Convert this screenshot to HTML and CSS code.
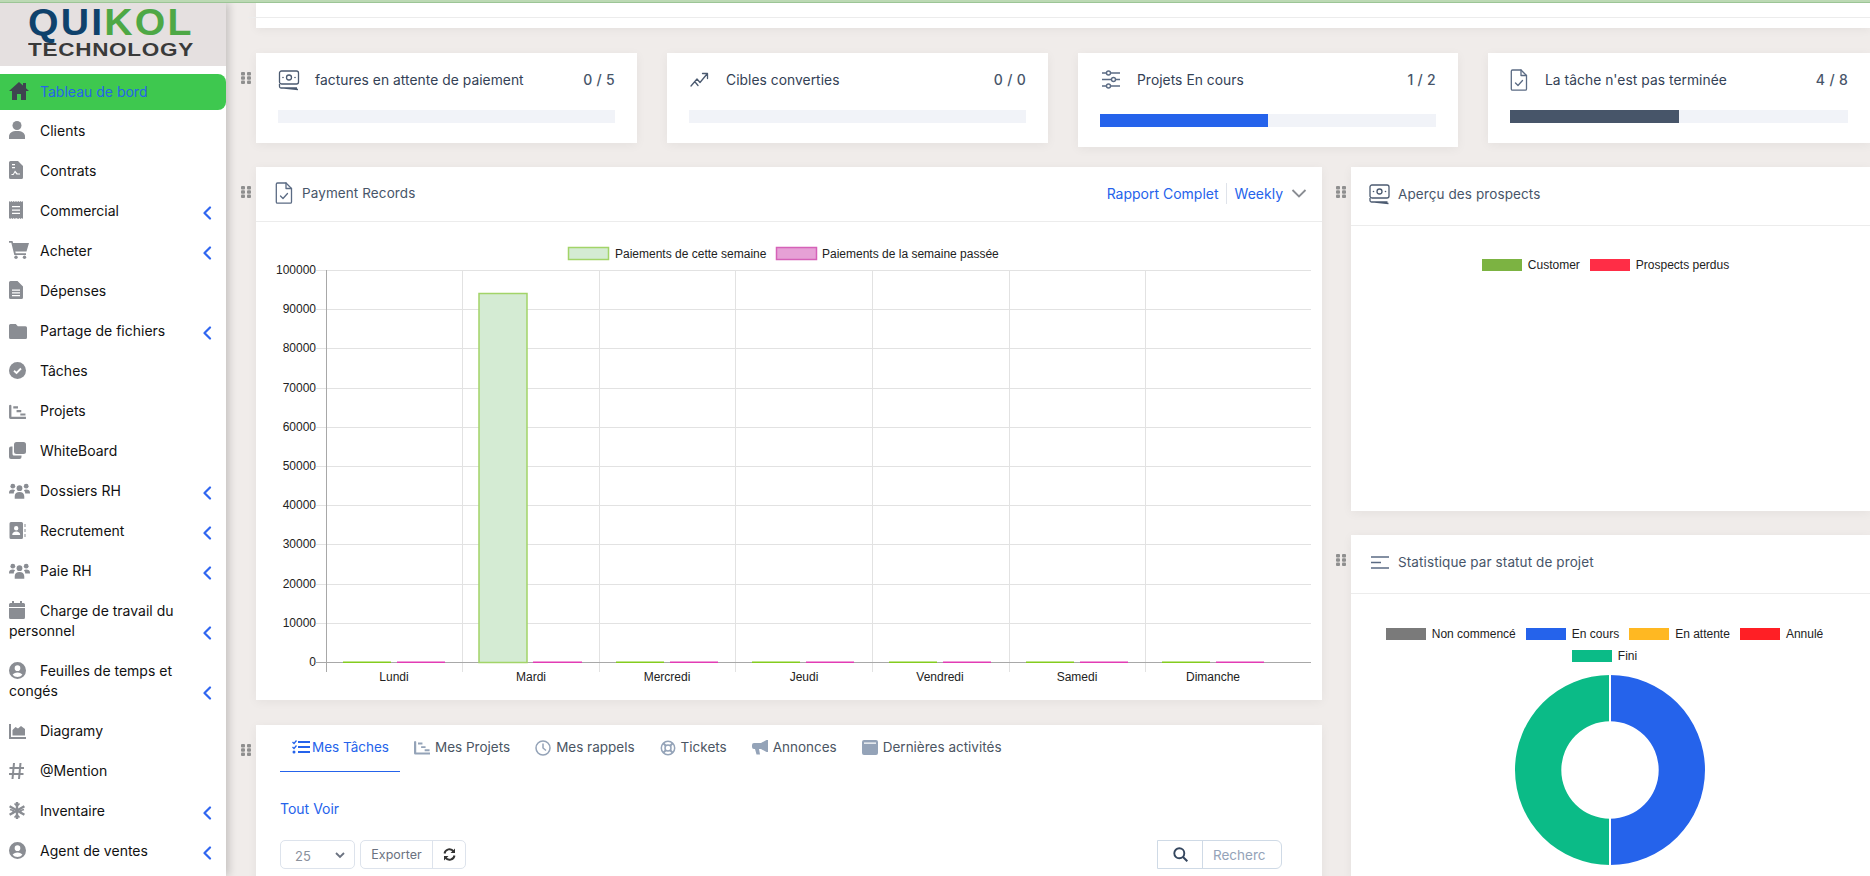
FILE: index.html
```html
<!DOCTYPE html>
<html lang="fr">
<head>
<meta charset="utf-8">
<title>Tableau de bord</title>
<link rel="stylesheet" href="styles.css">
</head>
<body>
<svg class="defs" width="0" height="0" aria-hidden="true">
  <symbol id="i-grip" viewBox="0 0 10 12"><g fill="#8f8f8f"><rect x="0" y="0" width="4" height="3.4" rx="1"/><rect x="6" y="0" width="4" height="3.4" rx="1"/><rect x="0" y="4.3" width="4" height="3.4" rx="1"/><rect x="6" y="4.3" width="4" height="3.4" rx="1"/><rect x="0" y="8.6" width="4" height="3.4" rx="1"/><rect x="6" y="8.6" width="4" height="3.4" rx="1"/></g></symbol>
  <symbol id="i-chev" viewBox="0 0 10 14"><path d="M8 1.5 2.5 7 8 12.500" fill="none" stroke="#2f66f0" stroke-width="2.200" stroke-linecap="round" stroke-linejoin="round"/></symbol>
  <symbol id="i-users" viewBox="0 0 22 16"><g fill="#8a8d93"><circle cx="4" cy="3" r="2.500"/><circle cx="18" cy="3" r="2.500"/><circle cx="11" cy="5" r="3"/><path d="M0 10c0-2.500 1.500-3.500 4-3.500 1 0 1.800.2 2.400.6C5.500 8 5 9 5 10.500H0zM22 10c0-2.500-1.500-3.500-4-3.500-1 0-1.800.2-2.400.6.900.9 1.400 1.900 1.400 3.400h5zM6 13.500C6 10.500 8 9 11 9s5 1.500 5 4.500V16H6z"/></g></symbol>
  <symbol id="i-ucircle" viewBox="0 0 18 18"><path fill="#8a8d93" fill-rule="evenodd" d="M9 0a9 9 0 1 1 0 18A9 9 0 0 1 9 0zm0 3.500a3 3 0 1 0 0 6 3 3 0 0 0 0-6zM3.800 13.600A6.800 6.800 0 0 0 9 16a6.800 6.800 0 0 0 5.200-2.400C13.500 12 11.500 11 9 11s-4.500 1-5.200 2.600z"/></symbol>
  <symbol id="i-gantt" viewBox="0 0 18 16"><path fill="currentColor" d="M0 1.500A1.500 1.500 0 0 1 2.500 1.500V13.500H18V16H1.500A1.500 1.500 0 0 1 0 14.500zM4.500 2.500h5v2.200h-5zM8 6.500h5v2.200H8zM12 10h5.500v2.200H12z"/></symbol>
  <symbol id="i-money" viewBox="0 0 22 22"><g fill="none" stroke="#4b5a70" stroke-width="1.300"><rect x="1.500" y="2" width="19" height="13" rx="2"/><circle cx="11" cy="8.500" r="2.500"/><path d="M1.500 15v2.500c0 .8.700 1.500 1.500 1.500h16M6 19l14 1.500"/></g><g fill="#4b5a70"><circle cx="5" cy="8.500" r=".8"/><circle cx="17" cy="8.500" r=".8"/></g></symbol>
  <symbol id="i-filecheck" viewBox="0 0 18 22"><g fill="none" stroke="#5b6b84" stroke-width="1.300" stroke-linejoin="round" stroke-linecap="round"><path d="M2.500 1h8.500l5.500 5.500v13.500a1.200 1.200 0 0 1-1.200 1.200H2.500A1.200 1.200 0 0 1 1.300 20V2.200A1.200 1.200 0 0 1 2.500 1z"/><path d="M11 1v5.500h5.500M5.500 14l2.500 2.500 4.500-5"/></g></symbol>
</svg>

<div class="topline"></div>
<div class="app">
  <aside class="sidebar">
    <div class="logo">
      <div class="logo-main"><span class="logo-navy">QUI</span><span class="logo-green">KOL</span></div>
      <div class="logo-sub">TECHNOLOGY</div>
    </div>
    <nav class="menu">
      <a class="item active"><span class="label"><span class="ico"><svg width="20" height="18" viewBox="0 0 20 18"><path fill="#3f4450" d="M10 0 0 9h3v9h5v-6h4v6h5V9h3L17 6.300V1h-3v2.600z"/></svg></span>Tableau de bord</span></a>
      <a class="item"><span class="label"><span class="ico"><svg width="16" height="18" viewBox="0 0 16 18"><g fill="#8a8d93"><circle cx="8" cy="4.500" r="4.500"/><path d="M0 18v-2.500C0 12 3 10 8 10s8 2 8 5.500V18z"/></g></svg></span>Clients</span></a>
      <a class="item"><span class="label"><span class="ico"><svg width="14" height="18" viewBox="0 0 14 18"><path fill="#8a8d93" fill-rule="evenodd" d="M1.500 0H9l5 5v11.500a1.500 1.500 0 0 1-1.500 1.500h-11A1.500 1.500 0 0 1 0 16.500v-15A1.500 1.500 0 0 1 1.500 0zM3 3v1.200h3V3zm0 3v1.200h3V6zm-.500 8h2l1.500-2.500 1.500 2h3.500v-1H8.500L6 9.500 4 13H2.500z"/></svg></span>Contrats</span></a>
      <a class="item"><span class="label"><span class="ico"><svg width="14" height="18" viewBox="0 0 14 18"><path fill="#8a8d93" fill-rule="evenodd" d="M0 0l1.200 1L2.300 0l1.200 1L4.700 0l1.200 1L7 0l1.100 1 1.200-1 1.100 1 1.200-1 1.200 1L14 0v18l-1.200-1-1.200 1-1.200-1-1.100 1L7 17l-1.100 1-1.200-1-1.200 1-1.200-1L1.200 18 0 17zM3 5v1.300h8V5zm0 3.400v1.300h8V8.400zm0 3.400v1.300h8v-1.300z"/></svg></span>Commercial</span><svg class="chev"><use href="#i-chev"/></svg></a>
      <a class="item"><span class="label"><span class="ico"><svg width="20" height="18" viewBox="0 0 20 18"><g fill="#8a8d93"><path d="M0 0h3.500l.6 2H20l-2.500 8.500H6.300l.4 1.800H17v1.700H5.300L2.300 1.700H0z"/><circle cx="7" cy="16.300" r="1.700"/><circle cx="15.500" cy="16.300" r="1.700"/></g></svg></span>Acheter</span><svg class="chev"><use href="#i-chev"/></svg></a>
      <a class="item"><span class="label"><span class="ico"><svg width="14" height="18" viewBox="0 0 14 18"><path fill="#8a8d93" fill-rule="evenodd" d="M1.500 0H8.500l5.500 5.500v11a1.500 1.500 0 0 1-1.500 1.500h-11A1.500 1.500 0 0 1 0 16.500v-15A1.500 1.500 0 0 1 1.500 0zM3 8.500v1.200h8V8.500zm0 2.800v1.200h8v-1.200zm0 2.800v1.200h8v-1.200z"/></svg></span>Dépenses</span></a>
      <a class="item"><span class="label"><span class="ico"><svg width="18" height="15" viewBox="0 0 18 15"><path fill="#8a8d93" d="M1.500 0h5.300l2 2.300h7.700A1.500 1.500 0 0 1 18 3.800v9.700a1.500 1.500 0 0 1-1.500 1.500h-15A1.500 1.500 0 0 1 0 13.500v-12A1.500 1.500 0 0 1 1.500 0z"/></svg></span>Partage de fichiers</span><svg class="chev"><use href="#i-chev"/></svg></a>
      <a class="item"><span class="label"><span class="ico"><svg width="17" height="17" viewBox="0 0 17 17"><circle cx="8.500" cy="8.500" r="8.500" fill="#8a8d93"/><path d="M5 8.800 7.500 11 12 6.500" fill="none" stroke="#fff" stroke-width="1.800"/></svg></span>Tâches</span></a>
      <a class="item"><span class="label"><span class="ico ico-grey"><svg width="17" height="15"><use href="#i-gantt"/></svg></span>Projets</span></a>
      <a class="item"><span class="label"><span class="ico"><svg width="17" height="17" viewBox="0 0 17 17"><g fill="#8a8d93"><rect x="5" y="0" width="12" height="12" rx="2.500"/><path d="M3.500 4.500v7.500c0 .8.700 1.500 1.500 1.500h7.500V15a2 2 0 0 1-2 2H2a2 2 0 0 1-2-2V6.500a2 2 0 0 1 2-2z"/></g></svg></span>WhiteBoard</span></a>
      <a class="item"><span class="label"><span class="ico"><svg width="21" height="16"><use href="#i-users"/></svg></span>Dossiers RH</span><svg class="chev"><use href="#i-chev"/></svg></a>
      <a class="item"><span class="label"><span class="ico"><svg width="17" height="17" viewBox="0 0 17 17"><path fill="#8a8d93" fill-rule="evenodd" d="M2 0h10.500A1.500 1.500 0 0 1 14 1.500v14a1.500 1.500 0 0 1-1.500 1.500H2A1.500 1.500 0 0 1 .5 15.500v-14A1.500 1.500 0 0 1 2 0zm5.200 4a2.200 2.200 0 1 0 0 4.400 2.200 2.200 0 0 0 0-4.400zM3.200 13h8c0-2-1.600-3.500-4-3.500s-4 1.500-4 3.500z"/><path fill="#8a8d93" d="M15.500 2h1v3h-1zM15.500 7h1v3h-1zM15.500 12h1v3h-1z"/></svg></span>Recrutement</span><svg class="chev"><use href="#i-chev"/></svg></a>
      <a class="item"><span class="label"><span class="ico"><svg width="21" height="16"><use href="#i-users"/></svg></span>Paie RH</span><svg class="chev"><use href="#i-chev"/></svg></a>
      <a class="item"><span class="label"><span class="ico"><svg width="16" height="18" viewBox="0 0 16 18"><path fill="#8a8d93" d="M3 0h2v2h6V0h2v2h1.500A1.500 1.500 0 0 1 16 3.500V6H0V3.500A1.500 1.500 0 0 1 1.500 2H3zM0 7h16v9.500a1.500 1.500 0 0 1-1.500 1.500h-13A1.500 1.500 0 0 1 0 16.500z"/></svg></span>Charge de travail du personnel</span><svg class="chev"><use href="#i-chev"/></svg></a>
      <a class="item"><span class="label"><span class="ico"><svg width="17" height="17"><use href="#i-ucircle"/></svg></span>Feuilles de temps et congés</span><svg class="chev"><use href="#i-chev"/></svg></a>
      <a class="item"><span class="label"><span class="ico"><svg width="17" height="15" viewBox="0 0 17 15"><path fill="#8a8d93" d="M0 0h2v13h15v2H0zM3.500 6l3-3 2.500 1.500L12 2l4 3v6.500H3.500z"/></svg></span>Diagramy</span></a>
      <a class="item"><span class="label"><span class="ico"><svg width="15" height="16" viewBox="0 0 15 16"><path fill="none" stroke="#8a8d93" stroke-width="2" d="M5 0 3.500 16M11.500 0 10 16M0.500 5H15M0 11h14.500"/></svg></span>@Mention</span></a>
      <a class="item"><span class="label"><span class="ico"><svg width="16" height="17" viewBox="0 0 16 17"><g fill="none" stroke="#8a8d93" stroke-width="2.400"><path d="M8 0v17M.6 4.200l14.800 8.600M15.400 4.200.6 12.800"/><path stroke-width="1.700" d="M5.500 1.500 8 4l2.500-2.500M5.500 15.500 8 13l2.500 2.500M1 7.500l3.400 1-1 3.400M15 7.500l-3.400 1 1 3.400"/></g></svg></span>Inventaire</span><svg class="chev"><use href="#i-chev"/></svg></a>
      <a class="item"><span class="label"><span class="ico"><svg width="17" height="17"><use href="#i-ucircle"/></svg></span>Agent de ventes</span><svg class="chev"><use href="#i-chev"/></svg></a>
    </nav>
  </aside>

  <main class="main">
    <div class="card strip"><div class="strip-line"></div></div>

    <section class="stats">
      <div class="card stat">
        <svg class="grip"><use href="#i-grip"/></svg>
        <div class="stat-head"><svg class="stat-ico" width="22" height="22"><use href="#i-money"/></svg><span class="stat-title">factures en attente de paiement</span><span class="stat-num">0 / 5</span></div>
        <div class="bar"></div>
      </div>
      <div class="card stat">
        <div class="stat-head"><svg class="stat-ico" width="22" height="21" viewBox="0 0 21 21"><path d="M1.500 17 7.500 10l3 3.500 7-8.500M13 4.500h5v5M6 13.500l2.500 3" fill="none" stroke="#4b5a70" stroke-width="1.300" stroke-linecap="round" stroke-linejoin="round"/></svg><span class="stat-title">Cibles converties</span><span class="stat-num">0 / 0</span></div>
        <div class="bar"></div>
      </div>
      <div class="card stat stat-tall">
        <div class="stat-head"><svg class="stat-ico" width="22" height="21" viewBox="0 0 21 21"><g stroke="#5b6b84" stroke-width="1.400" fill="#fff"><path d="M1.500 4h18M1.500 10.500h18M1.500 17h18"/><circle cx="8" cy="4" r="2"/><circle cx="13" cy="10.500" r="2"/><circle cx="8" cy="17" r="2"/></g></svg><span class="stat-title">Projets En cours</span><span class="stat-num">1 / 2</span></div>
        <div class="bar"><div class="fill fill-blue"></div></div>
      </div>
      <div class="card stat">
        <div class="stat-head"><svg class="stat-ico stat-ico-doc" width="18" height="22"><use href="#i-filecheck"/></svg><span class="stat-title">La tâche n'est pas terminée</span><span class="stat-num">4 / 8</span></div>
        <div class="bar"><div class="fill fill-slate"></div></div>
      </div>
    </section>

    <section class="content">
      <div class="col">
        <div class="card pay">
          <svg class="grip"><use href="#i-grip"/></svg>
          <header class="head pay-head">
            <svg class="head-ico" width="18" height="22"><use href="#i-filecheck"/></svg>
            <h2 class="head-title">Payment Records</h2>
            <a class="link report">Rapport Complet</a>
            <span class="weekly">Weekly<svg width="16" height="9" viewBox="0 0 15 9"><path d="M1 1l6.500 6.500L14 1" fill="none" stroke="#8a8d93" stroke-width="1.800"/></svg></span>
          </header>
          <svg class="chart" width="1066" height="478" viewBox="256 222 1066 478">
            <g stroke="#e2e2e2" stroke-width="1">
              <path d="M316 270.500H1311M316 309.500H1311M316 348.500H1311M316 388.500H1311M316 427.500H1311M316 466.500H1311M316 505.500H1311M316 544.500H1311M316 584.500H1311M316 623.500H1311"/>
              <path d="M462.500 270V672M599.500 270V672M735.500 270V672M872.500 270V672M1009.500 270V672M1145.500 270V672"/>
            </g>
            <path d="M326.500 270V672M316 662.500H1311" stroke="#a8a8a8" stroke-width="1" fill="none"/>
            <rect x="479" y="293.500" width="48" height="369" fill="#d4ebd3" stroke="#a2d468" stroke-width="1.500"/>
            <g fill="#84cc1e">
              <rect x="343" y="661.500" width="48" height="1.500"/><rect x="616" y="661.500" width="48" height="1.500"/><rect x="752" y="661.500" width="48" height="1.500"/><rect x="889" y="661.500" width="48" height="1.500"/><rect x="1026" y="661.500" width="48" height="1.500"/><rect x="1162" y="661.500" width="48" height="1.500"/>
            </g>
            <g fill="#e23cb4">
              <rect x="397" y="661.500" width="48" height="1.500"/><rect x="533" y="661.500" width="49" height="1.500"/><rect x="670" y="661.500" width="48" height="1.500"/><rect x="806" y="661.500" width="48" height="1.500"/><rect x="943" y="661.500" width="48" height="1.500"/><rect x="1080" y="661.500" width="48" height="1.500"/><rect x="1216" y="661.500" width="48" height="1.500"/>
            </g>
            <g class="axis" text-anchor="end">
              <text x="316" y="274">100000</text><text x="316" y="313">90000</text><text x="316" y="352">80000</text><text x="316" y="392">70000</text><text x="316" y="431">60000</text><text x="316" y="470">50000</text><text x="316" y="509">40000</text><text x="316" y="548">30000</text><text x="316" y="588">20000</text><text x="316" y="627">10000</text><text x="316" y="666">0</text>
            </g>
            <g class="axis" text-anchor="middle">
              <text x="394" y="681">Lundi</text><text x="531" y="681">Mardi</text><text x="667" y="681">Mercredi</text><text x="804" y="681">Jeudi</text><text x="940" y="681">Vendredi</text><text x="1077" y="681">Samedi</text><text x="1213" y="681">Dimanche</text>
            </g>
            <rect x="568.500" y="247.500" width="40" height="12" fill="#d4ebd3" stroke="#a2d468" stroke-width="1.500"/>
            <text class="axis" x="615" y="258">Paiements de cette semaine</text>
            <rect x="776.500" y="247.500" width="40" height="12" fill="#e6a1d6" stroke="#d562b8" stroke-width="1.500"/>
            <text class="axis" x="822" y="258">Paiements de la semaine passée</text>
          </svg>
        </div>

        <div class="card tabs-card">
          <svg class="grip"><use href="#i-grip"/></svg>
          <nav class="tabs">
            <a class="tab tab-on"><svg width="18" height="14" viewBox="0 0 18 14"><g fill="#2563eb"><path d="M6 1h12v2H6zM6 6h12v2H6zM6 11h12v2H6z"/><circle cx="2" cy="12" r="1.500"/></g><path d="M.5 2 2 3.500 4.500.5M.5 7 2 8.500l2.500-3" fill="none" stroke="#2563eb" stroke-width="1.300"/></svg>Mes Tâches</a>
            <a class="tab"><svg class="tab-gantt" width="16" height="15"><use href="#i-gantt"/></svg>Mes Projets</a>
            <a class="tab"><svg width="16" height="16" viewBox="0 0 16 16"><circle cx="8" cy="8" r="7" fill="none" stroke="#94a3b8" stroke-width="1.500"/><path d="M8 3.500V8l3 2.500" fill="none" stroke="#94a3b8" stroke-width="1.500"/></svg>Mes rappels</a>
            <a class="tab"><svg width="16" height="16" viewBox="0 0 16 16"><g fill="none" stroke="#94a3b8"><circle cx="8" cy="8" r="6.700" stroke-width="1.500"/><circle cx="8" cy="8" r="3" stroke-width="1.500"/><path stroke-width="2" d="m3.300 3.300 2.500 2.500M12.700 3.300l-2.500 2.500M3.300 12.700l2.500-2.500M12.700 12.700l-2.500-2.500"/></g></svg>Tickets</a>
            <a class="tab"><svg width="16" height="15" viewBox="0 0 16 15"><path fill="#94a3b8" d="M16 0v12h-1.500L9 9H7l1 5.500H4.500L3 9H2a2 2 0 0 1-2-2V5a2 2 0 0 1 2-2h7l5.500-3z"/></svg>Annonces</a>
            <a class="tab"><svg width="16" height="15" viewBox="0 0 16 15"><path fill="#94a3b8" fill-rule="evenodd" d="M2 0h12a2 2 0 0 1 2 2v11a2 2 0 0 1-2 2H2a2 2 0 0 1-2-2V2a2 2 0 0 1 2-2zm0 2.500v1.200h12V2.500z"/></svg>Dernières activités</a>
          </nav>
          <a class="link tout">Tout Voir</a>
          <div class="tools">
            <div class="select"><span>25</span><svg width="10" height="7" viewBox="0 0 10 7"><path d="M1 1l4 4 4-4" fill="none" stroke="#6b7280" stroke-width="1.800"/></svg></div>
            <div class="btns"><span class="btn">Exporter</span><span class="btn btn-ref"><svg width="13" height="13" viewBox="0 0 13 13"><g fill="none" stroke="#333" stroke-width="1.900"><path d="M1.500 5.500A5 5 0 0 1 10.600 3.500M11.500 7.500A5 5 0 0 1 2.400 9.500"/></g><path fill="#333" d="M12 .500v4.500H7.500zM1 12.500V8h4.500z"/></svg></span></div>
            <div class="search"><span class="search-ico"><svg width="15" height="15" viewBox="0 0 15 15"><circle cx="6.300" cy="6.300" r="5" fill="none" stroke="#34465e" stroke-width="1.900"/><path d="m10 10 4.300 4.300" stroke="#34465e" stroke-width="2"/></svg></span><span class="search-in">Recherc</span></div>
          </div>
        </div>
      </div>

      <div class="col col-right">
        <div class="card prospects">
          <svg class="grip"><use href="#i-grip"/></svg>
          <header class="head side-head">
            <svg class="head-ico ico-money" width="23" height="22"><use href="#i-money"/></svg>
            <h2 class="head-title">Aperçu des prospects</h2>
          </header>
          <div class="legend legend-p">
            <span class="lg"><i class="sw sw-lime"></i>Customer</span>
            <span class="lg"><i class="sw sw-rose"></i>Prospects perdus</span>
          </div>
        </div>

        <div class="card status">
          <svg class="grip"><use href="#i-grip"/></svg>
          <header class="head side-head">
            <svg class="head-ico ico-lines" width="18" height="13" viewBox="0 0 18 13"><path d="M0 1h18M0 6.500h10M0 12h18" stroke="#5b6b84" stroke-width="1.300"/></svg>
            <h2 class="head-title">Statistique par statut de projet</h2>
          </header>
          <div class="legend legend-s">
            <span class="lg"><i class="sw sw-grey"></i>Non commencé</span>
            <span class="lg"><i class="sw sw-blue"></i>En cours</span>
            <span class="lg"><i class="sw sw-amber"></i>En attente</span>
            <span class="lg"><i class="sw sw-red"></i>Annulé</span>
            <span class="lg"><i class="sw sw-teal"></i>Fini</span>
          </div>
          <svg class="donut" width="192" height="192" viewBox="-96 -96 192 192">
            <path d="M0-95A95 95 0 0 1 0 95V48.700A48.700 48.700 0 0 0 0-48.700z" fill="#2563eb"/>
            <path d="M0 95A95 95 0 0 1 0-95V-48.700A48.700 48.700 0 0 0 0 48.700z" fill="#0bbb87"/>
            <path d="M0-96V-48M0 48V96" stroke="#fff" stroke-width="2"/>
          </svg>
        </div>
      </div>
    </section>
  </main>
</div>
</body>
</html>
```

FILE: styles.css
```css
* { box-sizing: border-box; }
html, body { margin: 0; height: 100%; overflow: hidden; }
body {
  background: #f0ecea;
  font-family: Inter, "Noto Sans", sans-serif;
  font-size: 14px;
  color: #111;
}
.defs { position: absolute; }
.topline { height: 3px; background: #bcd9b4; border-bottom: 1px solid #9cc596; }
.app { display: flex; height: 873px; overflow: hidden; }

/* sidebar */
.sidebar {
  width: 226px;
  flex: none;
  background: #fff;
  box-shadow: 3px 0 8px rgba(0, 0, 0, .18);
  position: relative;
  z-index: 2;
}
.logo { height: 63px; background: #e5e0e0; padding: 3px 0 0 28px; overflow: hidden; }
.logo-main {
  font-family: "Liberation Sans", sans-serif;
  font-weight: 700;
  font-size: 36px;
  line-height: 33px;
  letter-spacing: 2px;
  white-space: nowrap;
  transform-origin: left top;
  transform: scaleX(1.09);
}
.logo-navy { color: #0f426c; }
.logo-green { color: #4ea845; }
.logo-sub {
  font-family: "Liberation Sans", sans-serif;
  font-weight: 700;
  font-size: 19px;
  line-height: 18px;
  margin-top: 2px;
  letter-spacing: .6px;
  color: #3a3a3a;
  white-space: nowrap;
  transform-origin: left top;
  transform: scaleX(1.185);
}
.menu { display: flex; flex-direction: column; padding-top: 8px; }
.item {
  display: flex;
  align-items: center;
  min-height: 40px;
  padding: 10px 14px 10px 9px;
  line-height: 20px;
  color: #111;
}
.active {
  min-height: 36px;
  height: 36px;
  margin-bottom: 1px;
  padding: 8px 15px 8px 9px;
  background: #3ec84f;
  border-radius: 0 8px 8px 0;
  color: #2563eb;
}
.label { flex: 1; min-width: 0; padding-right: 8px; }
.ico {
  display: inline-flex;
  align-items: center;
  width: 31px;
  height: 18px;
  vertical-align: -3px;
}
.ico-grey { color: #8a8d93; }
.chev { width: 10px; height: 14px; flex: none; align-self: flex-end; margin-bottom: 1px; }

/* main */
.main { flex: 1; min-width: 0; padding-left: 30px; }
.card { background: #fff; box-shadow: 0 2px 10px rgba(0, 0, 0, .05); position: relative; }
.strip { height: 25px; margin-bottom: 25px; }
.strip-line { height: 1px; margin-left: -8px; background: #ececec; position: relative; top: 14px; }
.grip { position: absolute; left: -15px; top: 19px; width: 10px; height: 12px; }

.stats {
  display: grid;
  grid-template-columns: 381px 381px 380px 1fr;
  column-gap: 30px;
  align-items: start;
  margin-bottom: 20px;
}
.stat { height: 90px; padding: 16px 22px 0; }
.stat-tall { height: 94px; }
.stat-head { display: flex; align-items: center; height: 21px; margin-bottom: 20px; }
.stat-ico { flex: none; margin-right: 15px; }
.stat-ico-doc { margin-right: 17px; }
.stat-title { flex: 1; font-size: 13.800px; letter-spacing: .05px; color: #334155; white-space: nowrap; }
.stat-num { font-size: 14px; font-weight: 500; color: #475569; letter-spacing: .3px; }
.bar { height: 13px; background: #f1f3f8; }
.stat-tall .bar { margin-top: 24px; }
.fill { height: 100%; }
.fill-blue { width: 50%; background: #2563eb; }
.fill-slate { width: 50%; background: #475569; }

.content { display: grid; grid-template-columns: 1066px 519px; column-gap: 29px; }
.col { display: flex; flex-direction: column; gap: 25px; }
.col-right { gap: 24px; }

.head { display: flex; align-items: center; border-bottom: 1px solid #ececec; padding-left: 19px; }
.pay-head { height: 55px; padding: 0 15px 2px 19px; }
.side-head { height: 59px; padding: 0 0 4px 18px; }
.head-ico { flex: none; margin-right: 9px; }
.ico-money { margin-left: -1px; margin-right: 7px; }
.ico-lines { margin-left: 2px; }
.head-title { flex: 1; margin: 0; font-size: 13.500px; font-weight: 400; color: #475569; letter-spacing: .1px; }
.link { color: #2563eb; }
.report { padding-right: 7px; border-right: 1px solid #dfe3ea; line-height: 21px; font-size: 14px; }
.weekly { display: inline-flex; align-items: center; gap: 8px; padding-left: 8px; color: #2563eb; }

.pay { height: 533px; }
.chart { display: block; }
.axis, .axis text { font-family: "Liberation Sans", sans-serif; font-size: 12px; fill: #222; }

/* tabs */
.tabs-card { height: 160px; padding-left: 24px; }
.tabs { display: flex; height: 47px; }
.tab {
  display: flex;
  align-items: flex-start;
  gap: 5px;
  padding: 14px 11px 0 14px;
  color: #4b5563;
  line-height: 16px;
  font-size: 13.500px;
  white-space: nowrap;
}
.tab svg { flex: none; margin-top: 1px; }
.tab-gantt { color: #94a3b8; }
.tab-on {
  color: #2563eb;
  height: 47px;
  gap: 2px;
  padding-left: 12px;
  border-bottom: 1px solid #2563eb;
}
.tout { display: block; margin-top: 27px; line-height: 20px; }
.tools { display: flex; align-items: center; margin-top: 21px; padding-right: 40px; }
.select {
  width: 75px;
  height: 29px;
  border: 1px solid #dde3ec;
  border-radius: 5px;
  display: flex;
  align-items: center;
  justify-content: space-between;
  padding: 2px 9px 0 14px;
  color: #8a919c;
  font-size: 13px;
  margin-right: 5px;
}
.btns { display: flex; height: 29px; border: 1px solid #dde3ec; border-radius: 5px; font-size: 12.500px; color: #6b7280; }
.btn { display: flex; align-items: center; justify-content: center; width: 71px; }
.btn-ref { width: 33px; border-left: 1px solid #dde3ec; }
.search { display: flex; height: 29px; margin-left: auto; border: 1px solid #cfdae6; border-radius: 0 6px 6px 0; }
.search-ico { display: flex; align-items: center; justify-content: center; width: 45px; border-right: 1px solid #cfdae6; }
.search-in { display: flex; align-items: center; width: 78px; padding-left: 10px; color: #94a3b8; font-size: 13.500px; }

/* side cards */
.prospects { height: 344px; }
.status { height: 345px; }
.legend {
  display: flex;
  flex-wrap: wrap;
  justify-content: center;
  font-family: "Liberation Sans", sans-serif;
  font-size: 12px;
  color: #222;
}
.lg { display: inline-flex; align-items: center; gap: 6px; height: 21px; white-space: nowrap; }
.sw { display: block; width: 40px; height: 12px; }
.legend-p { gap: 10px; padding: 28px 10px 0 0; }
.legend-s { column-gap: 10px; padding: 29px 40px 0 28px; }
.legend-s .lg { height: 22px; }
.sw-lime { background: #7cb342; }
.sw-rose { background: #ff2d46; }
.sw-grey { background: #7a7a7a; }
.sw-blue { background: #2563eb; }
.sw-amber { background: #ffb822; }
.sw-red { background: #ff1f25; }
.sw-teal { background: #0bbb87; }
.donut { display: block; margin: 7px 0 0 163px; }
```
